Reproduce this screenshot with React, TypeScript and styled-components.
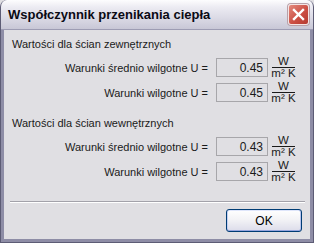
import styled, { createGlobalStyle } from "styled-components";

const GlobalStyle = createGlobalStyle`
  html, body {
    margin: 0;
    padding: 0;
    background: #e0dfe3;
  }
  body {
    font-family: Tahoma, "Liberation Sans", Arial, sans-serif;
  }
`;

const Window = styled.div`
  width: 314px;
  height: 243px;
  box-sizing: border-box;
  display: flex;
  flex-direction: column;
  background: #8e8da6;
  border-radius: 7px 7px 0 0;
  overflow: hidden;
  padding: 0 3px 3px 3px;
  border: 1px solid #5d5c75;
  border-top: none;
`;

const TitleBar = styled.div`
  height: 28px;
  margin: 0 -3px;
  display: flex;
  align-items: center;
  justify-content: space-between;
  padding: 0 4px 1px 7px;
  background: linear-gradient(
    #fdfdfe 0%,
    #ecebf2 25%,
    #dcdbe6 60%,
    #c8c7d6 100%
  );
  border-bottom: 1px solid #9d9cb3;
`;

const Title = styled.span`
  font-family: "Liberation Sans", Arial, sans-serif;
  font-weight: bold;
  font-size: 13px;
  color: #0a0a14;
`;

const CloseButton = styled.div`
  width: 19px;
  height: 19px;
  border: 1px solid #f4e4e4;
  border-radius: 3px;
  background: linear-gradient(135deg, #e38a7e 0%, #cc4f44 55%, #b43a31 100%);
  display: flex;
  align-items: center;
  justify-content: center;
  box-shadow: 0 0 0 1px #b8a0a8;
`;

const Client = styled.div`
  flex: 1;
  background: #e0dfe3;
  display: flex;
  flex-direction: column;
  padding: 0 6px 0 8px;
  font-size: 11px;
  color: #1a1a1a;
  font-family: "Liberation Sans", Arial, sans-serif;
`;

const Heading = styled.div<{ $top: number }>`
  height: 14px;
  line-height: 14px;
  margin-top: ${(p) => p.$top}px;
  margin-bottom: 7px;
`;

const Row = styled.div`
  display: flex;
  align-items: center;
  justify-content: flex-end;
  height: 19px;
  margin-bottom: 6px;
  padding-right: 9px;
`;

const Label = styled.span`
  margin-right: 8px;
  white-space: nowrap;
`;

const ValueBox = styled.div`
  height: 17px;
  border: 1px solid #a7a6aa;
  display: flex;
  align-items: center;
  justify-content: flex-end;
  padding-right: 4px;
  box-sizing: content-box;
  width: 46px;
  font-size: 12px;
`;

const Unit = styled.div`
  margin-left: 4px;
  width: 23px;
  display: flex;
  flex-direction: column;
  align-items: center;
  font-size: 11.5px;
  line-height: 9px;
`;

const Numerator = styled.span`
  display: block;
  width: 100%;
  text-align: center;
  border-bottom: 1px solid #1a1a1a;
  padding-bottom: 1px;
`;

const Denominator = styled.span`
  padding-top: 1px;
  white-space: nowrap;
`;

const Separator = styled.div`
  margin: 14px -1px 0 -2px;
  height: 1px;
  background: #a3a2aa;
  border-bottom: 1px solid #ffffff;
`;

const Footer = styled.div`
  display: flex;
  justify-content: flex-end;
  padding: 6px 2px 0 0;
`;

const OkButton = styled.button`
  width: 76px;
  height: 23px;
  border: 1px solid #003c74;
  border-radius: 3px;
  background: linear-gradient(#ffffff 0%, #f3f3f6 45%, #dcdcea 100%);
  box-shadow: inset 0 -1px 0 #97a6de, inset 1px 0 0 #c4d0f2,
    inset -1px 0 0 #b6c3ee, inset 0 1px 0 #dfe6fb;
  font-family: "Liberation Sans", Arial, sans-serif;
  font-size: 12px;
  color: #000;
  padding: 0;
`;

const rows = [
  {
    heading: "Wartości dla ścian zewnętrznych",
    top: 7,
    items: [
      { label: "Warunki średnio wilgotne U =", value: "0.45" },
      { label: "Warunki wilgotne U =", value: "0.45" },
    ],
  },
  {
    heading: "Wartości dla ścian wewnętrznych",
    top: 8,
    items: [
      { label: "Warunki średnio wilgotne U =", value: "0.43" },
      { label: "Warunki wilgotne U =", value: "0.43" },
    ],
  },
];

export default function App() {
  return (
    <>
      <GlobalStyle />
      <Window>
        <TitleBar>
          <Title>Współczynnik przenikania ciepła</Title>
          <CloseButton>
            <svg width="13" height="13" viewBox="0 0 13 13">
              <path
                d="M2 2 L11 11 M11 2 L2 11"
                stroke="#fff"
                strokeWidth="2.4"
                strokeLinecap="square"
              />
            </svg>
          </CloseButton>
        </TitleBar>
        <Client>
          {rows.map((group) => (
            <div key={group.heading}>
              <Heading $top={group.top}>{group.heading}</Heading>
              {group.items.map((item, i) => (
                <Row key={i}>
                  <Label>{item.label}</Label>
                  <ValueBox>{item.value}</ValueBox>
                  <Unit>
                    <Numerator>W</Numerator>
                    <Denominator>m² K</Denominator>
                  </Unit>
                </Row>
              ))}
            </div>
          ))}
          <Separator />
          <Footer>
            <OkButton>OK</OkButton>
          </Footer>
        </Client>
      </Window>
    </>
  );
}
